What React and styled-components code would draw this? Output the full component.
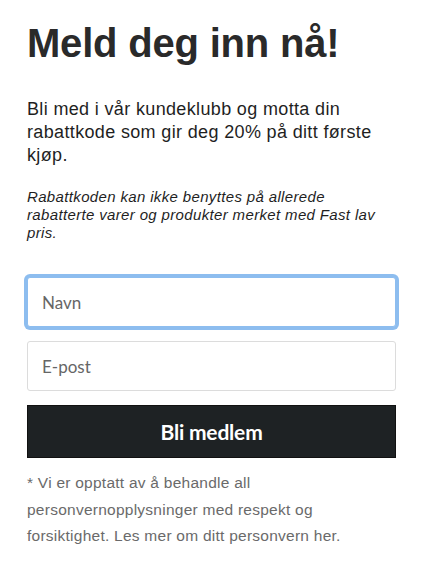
import React from "react";
import styled, { createGlobalStyle } from "styled-components";

const Global = createGlobalStyle`
  html, body { margin: 0; padding: 0; background: #fff; }
  * { box-sizing: border-box; }
`;

const Page = styled.div`
  padding: 17px 27px 0 27px;
  font-family: "Liberation Sans", Arial, sans-serif;
  color: #262626;
`;

const Title = styled.h1`
  margin: 0;
  font-size: 40px;
  font-weight: 700;
  line-height: 52px;
  letter-spacing: -0.2px;
  color: #2a2a2a;
`;

const Lead = styled.p`
  margin: 29px 0 0 0;
  font-size: 18px;
  line-height: 23px;
  letter-spacing: 0.35px;
  color: #1f1f1f;
`;

const Note = styled.p`
  margin: 21px 0 0 0;
  font-size: 15px;
  line-height: 18px;
  letter-spacing: 0.35px;
  font-style: italic;
  color: #1f1f1f;
`;

const Form = styled.form`
  margin-top: 35px;
  display: flex;
  flex-direction: column;
  gap: 14px;
`;

const Input = styled.input`
  width: 100%;
  height: 50px;
  padding: 0 14px;
  font-family: Lato, "Liberation Sans", sans-serif;
  font-size: 17px;
  color: #333;
  background: #fff;
  border: 1px solid ${(p) => (p.$focused ? "#8dbdef" : "#dcdcdc")};
  border-radius: 3px;
  box-shadow: ${(p) => (p.$focused ? "0 0 0 3px #8dbdef" : "none")};
  outline: none;
  &::placeholder { color: #666; }
`;

const Button = styled.button`
  height: 53px;
  width: 100%;
  border: 1px solid #111;
  background: #1e2224;
  color: #fff;
  font-family: Lato, "Liberation Sans", sans-serif;
  font-weight: 700;
  font-size: 21px;
  letter-spacing: -0.2px;
  cursor: pointer;
`;

const Fine = styled.p`
  margin: 12px 0 0 0;
  font-size: 15.5px;
  line-height: 26.5px;
  letter-spacing: 0.25px;
  color: #6a6a6a;
`;

export default function App() {
  return (
    <>
      <Global />
      <Page>
        <Title>Meld deg inn nå!</Title>
        <Lead>
          Bli med i vår kundeklubb og motta din rabattkode som gir deg 20% på ditt første kjøp.
        </Lead>
        <Note>
          Rabattkoden kan ikke benyttes på allerede rabatterte varer og produkter merket med Fast lav pris.
        </Note>
        <Form onSubmit={(e) => e.preventDefault()}>
          <Input $focused placeholder="Navn" />
          <Input placeholder="E-post" />
          <Button type="submit">Bli medlem</Button>
        </Form>
        <Fine>
          * Vi er opptatt av å behandle all personvernopplysninger med respekt og forsiktighet. Les mer om ditt personvern her.
        </Fine>
      </Page>
    </>
  );
}
